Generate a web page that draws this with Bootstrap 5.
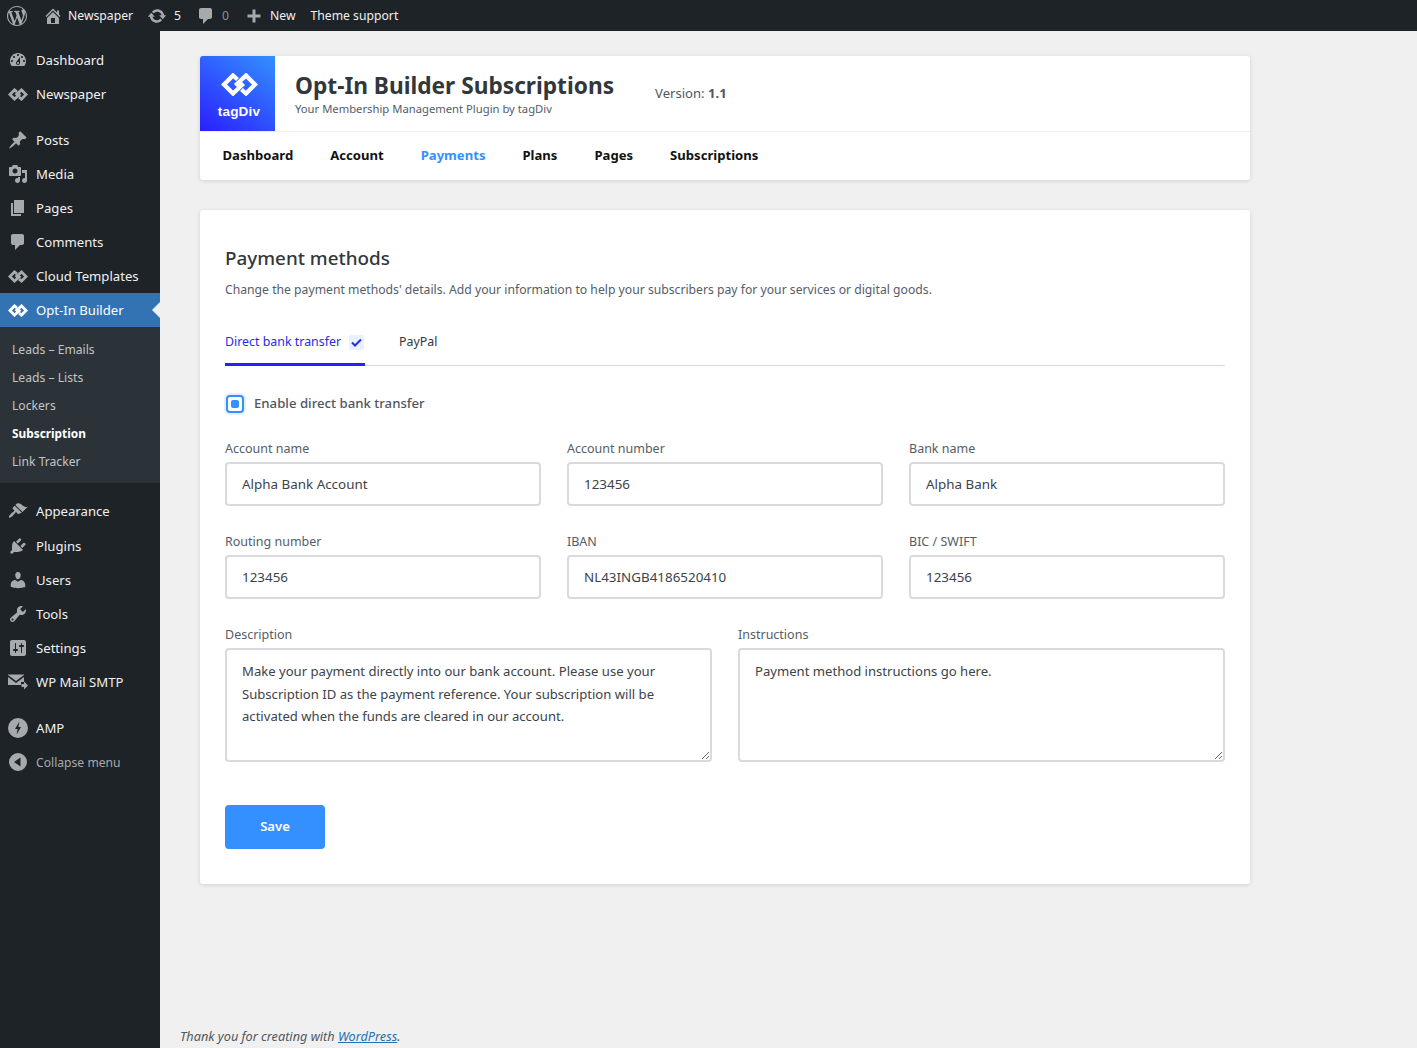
<!DOCTYPE html>
<html lang="en"><head><meta charset="utf-8"><title>Subscriptions</title>
<link rel="stylesheet" href="https://cdn.jsdelivr.net/npm/bootstrap@5.3.0/dist/css/bootstrap.min.css">
<style>
html,body{height:100%}
body{background:#f0f0f1;font-family:"Noto Sans","Open Sans",sans-serif;font-size:12.2px;color:#3c434a;overflow:hidden}
svg.ic{fill:currentColor;display:block;flex:none}
.topbar{height:31px;background:#1d2327;color:#f0f0f1;font-size:12.2px;padding-left:7px}
.topbar .ic{color:#a7aaad}
.topbar span{margin-top:1px}
.tb-item{height:31px;gap:5px}
.tb-home{margin-left:16px}
.tb-upd{margin-left:14px;gap:7px}
.tb-com{margin-left:15px;gap:6px}
.tb-new{margin-left:17px;gap:8px}
.tb-theme{margin-left:15px}
.tb-muted{color:#8c8f94}
.shell{height:1017px}
.sidemenu{width:160px;background:#1d2327;color:#f0f0f1;flex:none;font-size:13.15px;padding-top:12px}
.side-item{height:34px;padding-left:8px;gap:8px;position:relative}
.side-item span{margin-top:2px}
.side-item.tall{height:35px}
.side-item .ic{color:#a7aaad}
.side-item.on{background:#3373b4;color:#fff}
.side-item.on .ic{color:#fff}
.side-item.on::after{content:"";position:absolute;right:0;top:9px;border:8px solid transparent;border-right-color:#f0f0f1;border-left:0}
.sp1{margin-top:11px}
.sp2{margin-top:12px}
.sub-wrap{background:#2c3338;padding:8px 0;color:#c3c4c7;font-size:12.15px}
.sub-link{height:28px;padding:2px 0 0 12px;display:flex;align-items:center}
.sub-link.cur{color:#fff;font-weight:700;font-size:11.85px}
.side-muted{color:#a7aaad;font-size:12.15px}
.page-area{flex:1;padding:25px 0 0 40px;position:relative;min-width:0}
.panel{width:1050px;background:#fff;border-radius:3px;box-shadow:0 1px 4px rgba(0,0,0,.13)}
.logo-box{width:75px;height:75px;padding:3px 0 0 3px;background:linear-gradient(215deg,#3490ff 0%,#2a1fff 100%);color:#fff;border-top-left-radius:3px;flex:none}
.logo-mark{margin-top:3px}
.logo-name{font-family:"Liberation Sans",Arial,sans-serif;font-size:13.5px;font-weight:700;line-height:16px;letter-spacing:.2px;margin-top:8px}
.head-text{margin-left:20px;padding-top:2px}
.head-title{font-size:22.7px;font-weight:700;line-height:28px;color:#32373c;margin:0}
.head-sub{font-size:11.25px;line-height:16px;color:#555d66;margin-top:1px}
.ver{font-size:13.1px;margin-left:41px;color:#50575e}
.head-row{height:75px}
.tabnav{height:49px;padding-left:22.5px;gap:37px;font-weight:700;font-size:13.1px;color:#111;border-top:1px solid #eceef0}
.tabnav .act{color:#3490ff}
.form-panel{margin-top:30px;height:674px;padding:35px 25px 0}
.pm-title{font-size:18.85px;font-weight:500;line-height:26px;color:#32373c;margin:0 0 10px}
.pm-desc{font-size:12.2px;line-height:18px;color:#555d66;margin:0}
.pm-tabs{margin-top:23px;height:44px;border-bottom:1px solid #d6d9e6;font-size:12.4px;color:#32373c}
.pm-tab-a{width:140px;height:44px;color:#2a2be8;border-bottom:3px solid #2a1fff;padding-bottom:1px;gap:8px;white-space:nowrap}
.chk-mini{width:15px;height:15px;background:#e8f1ff;border-radius:2px;color:#2a2be8;display:flex;align-items:center;justify-content:center}
.pm-tab-b{margin-left:34px;padding-bottom:3px}
.en-row{margin-top:28px;height:20px;gap:10px;font-size:13.2px;font-weight:500;color:#50575e}
.toggle-box{width:18px;height:18px;border:2px solid #3490ff;border-radius:4px;background:#fff;box-shadow:0 0 0 2px #e3efff;margin-left:1px;display:flex;align-items:center;justify-content:center}
.toggle-box i{display:block;width:8px;height:8px;border-radius:2px;background:#3490ff}
.field-lbl{font-size:12.5px;line-height:18px;color:#555d66;margin-bottom:4px;display:block}
.field-in.form-control,.field-ta.form-control{border:2px solid #d9d9e0;border-radius:4px;color:#3c434a;box-shadow:none;background:#fff;font-family:inherit}
.field-in.form-control{height:44px;padding:0 15px;font-size:13.4px}
.field-ta.form-control{height:114px;padding:10px 15px;line-height:22.5px;resize:vertical;font-size:13.1px}
.grid3{display:grid;grid-template-columns:316px 316px 316px;column-gap:26px;row-gap:27px;margin-top:26px}
.grid2{display:grid;grid-template-columns:487px 487px;column-gap:26px;margin-top:27px}
.save-btn.btn{width:100px;height:44px;background:#3490ff;border:0;color:#fff;font-weight:600;font-size:13.1px;border-radius:4px;margin-top:43px;display:block;padding:0}
.foot-note{position:absolute;left:20px;bottom:3px;font-style:italic;font-size:12.7px;line-height:18px;color:#50575e}
.foot-note a{color:#2271b1}
</style></head><body>
<svg width="0" height="0" class="position-absolute"><defs>
<symbol id="td" viewBox="0 0 37 23"><path d="M16.5 6.500 12 2.500 3 11.500 12 20.500 21 12 19 10M20.500 16.500 25 20.500 34 11.500 25 2.500 16 11 18 13" fill="none" stroke="currentColor" stroke-width="4.300"/></symbol>
<symbol id="tds" viewBox="0 0 37 23"><path d="M16.5 6.500 12 3 3.500 11.500 12 20 21 12 19 10M20.500 16.500 25 20 33.500 11.500 25 3 16 11 18 13" fill="none" stroke="currentColor" stroke-width="5.200"/></symbol>
</defs></svg>

<div class="topbar d-flex align-items-center">
 <div class="tb-item d-flex align-items-center"><svg class="ic" width="20" height="20" viewBox="0 0 20 20"><path d="M20 10c0-5.52-4.48-10-10-10S0 4.48 0 10s4.48 10 10 10 10-4.48 10-10zM7.78 15.37L4.37 6.22c.55-.02 1.17-.08 1.17-.08.5-.06.44-1.13-.06-1.11 0 0-1.45.11-2.37.11-.18 0-.37 0-.58-.01C4.12 2.69 6.87 1.11 10 1.11c2.33 0 4.45.87 6.05 2.34-.68-.11-1.65.39-1.65 1.58 0 .74.45 1.36.9 2.1.35.61.55 1.36.55 2.46 0 1.49-1.4 5-1.4 5l-3.03-8.37c.54-.02.82-.17.82-.17.5-.05.44-1.25-.06-1.22 0 0-1.44.12-2.38.12-.87 0-2.33-.12-2.33-.12-.5-.03-.56 1.2-.06 1.22l.92.08 1.26 3.41zM17.41 10c.24-.64.74-1.87.43-4.25.7 1.29 1.05 2.71 1.05 4.25 0 3.29-1.73 6.24-4.4 7.78.97-2.59 1.94-5.2 2.92-7.78zM6.1 18.09C3.12 16.65 1.11 13.53 1.11 10c0-1.3.23-2.48.72-3.59C3.25 10.3 4.67 14.2 6.1 18.09zm4.03-6.63l2.58 6.98c-.86.29-1.76.45-2.71.45-.79 0-1.57-.11-2.29-.33.81-2.38 1.62-4.74 2.42-7.1z"/></svg></div>
 <div class="tb-item tb-home d-flex align-items-center"><svg class="ic" width="20" height="20" viewBox="0 0 20 20"><path d="M16 8.5l1.53 1.53-1.06 1.06L10 4.62l-6.47 6.47-1.06-1.06L10 2.5l4 4v-2h2v4zm-6-2.46l6 5.99V18H4v-5.97zM12 17v-5H8v5h4z"/></svg><span>Newspaper</span></div>
 <div class="tb-item tb-upd d-flex align-items-center"><svg class="ic" width="20" height="20" viewBox="0 0 20 20"><path d="M10.2 3.28c3.53 0 6.43 2.61 6.92 6h2.08l-3.5 4-3.5-4h2.32c-.45-1.97-2.21-3.45-4.32-3.45-1.45 0-2.73.71-3.54 1.78L4.95 5.66C6.23 4.2 8.11 3.28 10.2 3.28zm-.4 13.44c-3.52 0-6.43-2.61-6.92-6H.8l3.5-4c1.17 1.33 2.33 2.67 3.5 4H5.48c.45 1.97 2.21 3.45 4.32 3.45 1.45 0 2.73-.71 3.54-1.78l1.71 1.95c-1.28 1.46-3.15 2.38-5.25 2.38z"/></svg><span>5</span></div>
 <div class="tb-item tb-com d-flex align-items-center"><svg class="ic" width="20" height="20" viewBox="0 0 20 20"><path d="M5 2h9c1.1 0 2 .9 2 2v7c0 1.1-.9 2-2 2h-2l-5 5v-5H5c-1.1 0-2-.9-2-2V4c0-1.1.9-2 2-2z"/></svg><span class="tb-muted">0</span></div>
 <div class="tb-item tb-new d-flex align-items-center"><svg class="ic" width="16" height="16" viewBox="0 0 16 16"><path d="M6.5 1.5h3v5h5v3h-5v5h-3v-5h-5v-3h5z"/></svg><span>New</span></div>
 <div class="tb-item tb-theme d-flex align-items-center"><span>Theme support</span></div>
</div>

<div class="shell d-flex">
 <nav class="sidemenu">
  <div class="side-item d-flex align-items-center"><svg class="ic" width="20" height="20" viewBox="0 0 20 20"><path d="M3.76 16h12.48c1.1-1.37 1.76-3.11 1.76-5 0-4.42-3.58-8-8-8s-8 3.58-8 8c0 1.89.66 3.63 1.76 5zM10 4c.55 0 1 .45 1 1s-.45 1-1 1-1-.45-1-1 .45-1 1-1zM6 6c.55 0 1 .45 1 1s-.45 1-1 1-1-.45-1-1 .45-1 1-1zm8 0c.55 0 1 .45 1 1s-.45 1-1 1-1-.45-1-1 .45-1 1-1zm-5.37 5.55L12 7v6c0 1.1-.9 2-2 2s-2-.9-2-2c0-.57.24-1.08.63-1.45zM4 10c.55 0 1 .45 1 1s-.45 1-1 1-1-.45-1-1 .45-1 1-1zm12 0c.55 0 1 .45 1 1s-.45 1-1 1-1-.45-1-1 .45-1 1-1zm-5 3c0-.55-.45-1-1-1s-1 .45-1 1 .45 1 1 1 1-.45 1-1z"/></svg><span>Dashboard</span></div>
  <div class="side-item d-flex align-items-center"><svg class="ic" width="20" height="13"><use href="#tds"/></svg><span>Newspaper</span></div>
  <div class="side-item tall d-flex align-items-center sp1"><svg class="ic" width="20" height="20" viewBox="0 0 20 20"><path d="M10.44 3.02l1.82-1.82 6.36 6.35-1.83 1.82c-1.05-.68-2.48-.57-3.41.36l-.75.75c-.92.93-1.04 2.35-.35 3.41l-1.83 1.82-2.41-2.41-2.8 2.79c-.42.42-3.38 2.71-3.8 2.29s1.86-3.39 2.28-3.81l2.79-2.79L4.1 9.36l1.83-1.82c1.05.69 2.48.57 3.4-.36l.75-.75c.93-.92 1.05-2.35.36-3.41z"/></svg><span>Posts</span></div>
  <div class="side-item d-flex align-items-center"><svg class="ic" width="20" height="20" viewBox="0 0 20 20"><path d="M13 11V4c0-.55-.45-1-1-1h-1.67L9 1H5L3.67 3H2c-.55 0-1 .45-1 1v7c0 .55.45 1 1 1h10c.55 0 1-.45 1-1zM7 4.5c1.38 0 2.5 1.12 2.5 2.5S8.38 9.5 7 9.5 4.5 8.38 4.5 7 5.62 4.5 7 4.5zM14 6h5v10.5c0 1.38-1.12 2.5-2.5 2.5S14 17.88 14 16.5s1.12-2.5 2.5-2.5c.17 0 .34.02.5.05V9h-3V6zm-4 8.05V13h2v3.5c0 1.38-1.12 2.5-2.5 2.5S7 17.88 7 16.5 8.12 14 9.5 14c.17 0 .34.02.5.05z"/></svg><span>Media</span></div>
  <div class="side-item d-flex align-items-center"><svg class="ic" width="20" height="20" viewBox="0 0 20 20"><path d="M6 15V2h10v13H6zm-1 1h8v2H3V5h2v11z"/></svg><span>Pages</span></div>
  <div class="side-item d-flex align-items-center"><svg class="ic" width="20" height="20" viewBox="0 0 20 20"><path d="M5 2h9c1.1 0 2 .9 2 2v7c0 1.1-.9 2-2 2h-2l-5 5v-5H5c-1.1 0-2-.9-2-2V4c0-1.1.9-2 2-2z"/></svg><span>Comments</span></div>
  <div class="side-item d-flex align-items-center"><svg class="ic" width="20" height="13"><use href="#tds"/></svg><span>Cloud Templates</span></div>
  <div class="side-item on d-flex align-items-center"><svg class="ic" width="20" height="13"><use href="#tds"/></svg><span>Opt-In Builder</span></div>
  <div class="sub-wrap">
   <div class="sub-link">Leads – Emails</div><div class="sub-link">Leads – Lists</div><div class="sub-link">Lockers</div><div class="sub-link cur">Subscription</div><div class="sub-link">Link Tracker</div>
  </div>
  <div class="side-item d-flex align-items-center sp1"><svg class="ic" width="20" height="20" viewBox="0 0 20 20"><path d="M14.48 11.06L7.41 3.99l1.5-1.5c.5-.56 2.3-.47 3.51.32 1.21.8 1.43 1.28 2.91 2.1 1.18.64 2.45 1.26 4.45.85zm-.71.71L6.7 4.7 4.93 6.47c-.39.39-.39 1.02 0 1.41l1.06 1.06c.39.39.39 1.03 0 1.42-.6.6-1.43 1.11-2.21 1.69-.35.26-.7.53-1.01.84-1.34 1.34-2.37 2.96-1.67 3.66.7.71 2.32-.33 3.68-1.69.31-.31.58-.66.84-1.01.58-.78 1.09-1.61 1.69-2.21.39-.39 1.02-.39 1.41 0l1.06 1.06c.39.39 1.02.39 1.41 0z"/></svg><span>Appearance</span></div>
  <div class="side-item tall d-flex align-items-center"><svg class="ic" width="20" height="20" viewBox="0 0 20 20"><path d="M13.11 4.36L9.87 7.6 8 5.73l3.24-3.24c.35-.34 1.05-.2 1.56.32.52.51.66 1.21.31 1.55zm-8 1.77l.91-1.12 9.01 9.01-1.19.84c-.71.71-2.63 1.16-3.82 1.16H6.14L4.9 17.26c-.59.59-1.54.59-2.12 0-.59-.58-.59-1.53 0-2.12l1.24-1.24v-3.88c0-1.13.4-3.19 1.09-3.89zm7.26 3.97l3.24-3.24c.34-.35 1.04-.21 1.55.31.52.51.66 1.21.31 1.55l-3.24 3.25z"/></svg><span>Plugins</span></div>
  <div class="side-item d-flex align-items-center"><svg class="ic" width="20" height="20" viewBox="0 0 20 20"><path d="M10 9.25c-2.27 0-2.73-3.44-2.73-3.44C7 4.02 7.82 2 9.97 2c2.16 0 2.98 2.02 2.71 3.81 0 0-.41 3.44-2.68 3.44zm0 2.57L12.72 10c2.39 0 4.52 2.33 4.52 4.53v2.49s-3.65 1.13-7.24 1.13c-3.65 0-7.24-1.13-7.24-1.13v-2.49c0-2.25 1.94-4.48 4.47-4.48z"/></svg><span>Users</span></div>
  <div class="side-item d-flex align-items-center"><svg class="ic" width="20" height="20" viewBox="0 0 20 20"><path d="M16.68 9.77c-1.34 1.34-3.3 1.67-4.95.99l-5.41 6.52c-.99.99-2.59.99-3.58 0s-.99-2.59 0-3.57l6.52-5.42c-.68-1.65-.35-3.61.99-4.95 1.28-1.28 3.12-1.62 4.72-1.06l-2.89 2.89 2.82 2.82 2.86-2.87c.53 1.58.18 3.39-1.08 4.65zM3.81 16.21c.4.39 1.04.39 1.43 0 .4-.4.4-1.04 0-1.43-.39-.4-1.03-.4-1.43 0-.39.39-.39 1.03 0 1.43z"/></svg><span>Tools</span></div>
  <div class="side-item d-flex align-items-center"><svg class="ic" width="20" height="20" viewBox="0 0 20 20"><path d="M18 16V4c0-1.1-.9-2-2-2H4c-1.1 0-2 .9-2 2v12c0 1.1.9 2 2 2h12c1.1 0 2-.9 2-2zM8 11h1c.55 0 1 .45 1 1s-.45 1-1 1H8v1.5c0 .28-.22.5-.5.5s-.5-.22-.5-.5V13H6c-.55 0-1-.45-1-1s.45-1 1-1h1V5.5c0-.28.22-.5.5-.5s.5.22.5.5V11zm5-2h-1c-.55 0-1-.45-1-1s.45-1 1-1h1V5.5c0-.28.22-.5.5-.5s.5.22.5.5V7h1c.55 0 1 .45 1 1s-.45 1-1 1h-1v5.5c0 .28-.22.5-.5.5s-.5-.22-.5-.5V9z"/></svg><span>Settings</span></div>
  <div class="side-item d-flex align-items-center"><svg class="ic" width="20" height="20" viewBox="0 0 20 20"><path d="M0 2.5h16V3L8 9 0 3zM0 5l8 6 8-6v5h-3v3H0z"/><path d="M13.5 12H16V9.5l4 4-4 4V15h-2.500z"/></svg><span>WP Mail SMTP</span></div>
  <div class="side-item d-flex align-items-center sp2"><svg class="ic" width="20" height="20" viewBox="0 0 20 20"><path fill-rule="evenodd" d="M10 0a10 10 0 1 0 0 20 10 10 0 0 0 0-20zM11.400 3.600 7 11h2.600l-1 5.400L13 9h-2.600z"/></svg><span>AMP</span></div>
  <div class="side-item side-muted d-flex align-items-center"><svg class="ic" width="20" height="20" viewBox="0 0 20 20"><path fill-rule="evenodd" d="M10 1a9 9 0 1 0 0 18 9 9 0 0 0 0-18zM12.500 5.500v9L6 10z"/></svg><span>Collapse menu</span></div>
 </nav>

 <main class="page-area">
  <section class="panel">
   <div class="head-row d-flex align-items-center">
    <div class="logo-box d-flex flex-column align-items-center justify-content-center">
     <svg class="ic logo-mark" width="37" height="23"><use href="#td"/></svg>
     <div class="logo-name">tagDiv</div>
    </div>
    <div class="head-text"><h1 class="head-title">Opt-In Builder Subscriptions</h1><div class="head-sub">Your Membership Management Plugin by tagDiv</div></div>
    <div class="ver">Version: <b>1.1</b></div>
   </div>
   <div class="tabnav d-flex align-items-center"><span>Dashboard</span><span>Account</span><span class="act">Payments</span><span>Plans</span><span>Pages</span><span>Subscriptions</span></div>
  </section>

  <section class="panel form-panel">
   <h2 class="pm-title">Payment methods</h2>
   <p class="pm-desc">Change the payment methods' details. Add your information to help your subscribers pay for your services or digital goods.</p>
   <div class="pm-tabs d-flex">
    <div class="pm-tab-a d-flex align-items-center"><span>Direct bank transfer</span><span class="chk-mini"><svg width="11" height="9" viewBox="0 0 11 9"><path d="M1 4.500 4 7.500 10 1.500" fill="none" stroke="currentColor" stroke-width="2"/></svg></span></div>
    <div class="pm-tab-b d-flex align-items-center">PayPal</div>
   </div>
   <div class="en-row d-flex align-items-center"><span class="toggle-box"><i></i></span><span>Enable direct bank transfer</span></div>
   <div class="grid3">
    <div><label class="field-lbl">Account name</label><input class="form-control field-in" value="Alpha Bank Account"></div>
    <div><label class="field-lbl">Account number</label><input class="form-control field-in" value="123456"></div>
    <div><label class="field-lbl">Bank name</label><input class="form-control field-in" value="Alpha Bank"></div>
    <div><label class="field-lbl">Routing number</label><input class="form-control field-in" value="123456"></div>
    <div><label class="field-lbl">IBAN</label><input class="form-control field-in" value="NL43INGB4186520410"></div>
    <div><label class="field-lbl">BIC / SWIFT</label><input class="form-control field-in" value="123456"></div>
   </div>
   <div class="grid2">
    <div><label class="field-lbl">Description</label><textarea class="form-control field-ta">Make your payment directly into our bank account. Please use your Subscription ID as the payment reference. Your subscription will be activated when the funds are cleared in our account.</textarea></div>
    <div><label class="field-lbl">Instructions</label><textarea class="form-control field-ta">Payment method instructions go here.</textarea></div>
   </div>
   <button class="btn save-btn" type="button">Save</button>
  </section>
  <div class="foot-note">Thank you for creating with <a href="#">WordPress</a>.</div>
 </main>
</div>
<script src="https://cdn.jsdelivr.net/npm/bootstrap@5.3.0/dist/js/bootstrap.bundle.min.js"></script>
</body></html>
